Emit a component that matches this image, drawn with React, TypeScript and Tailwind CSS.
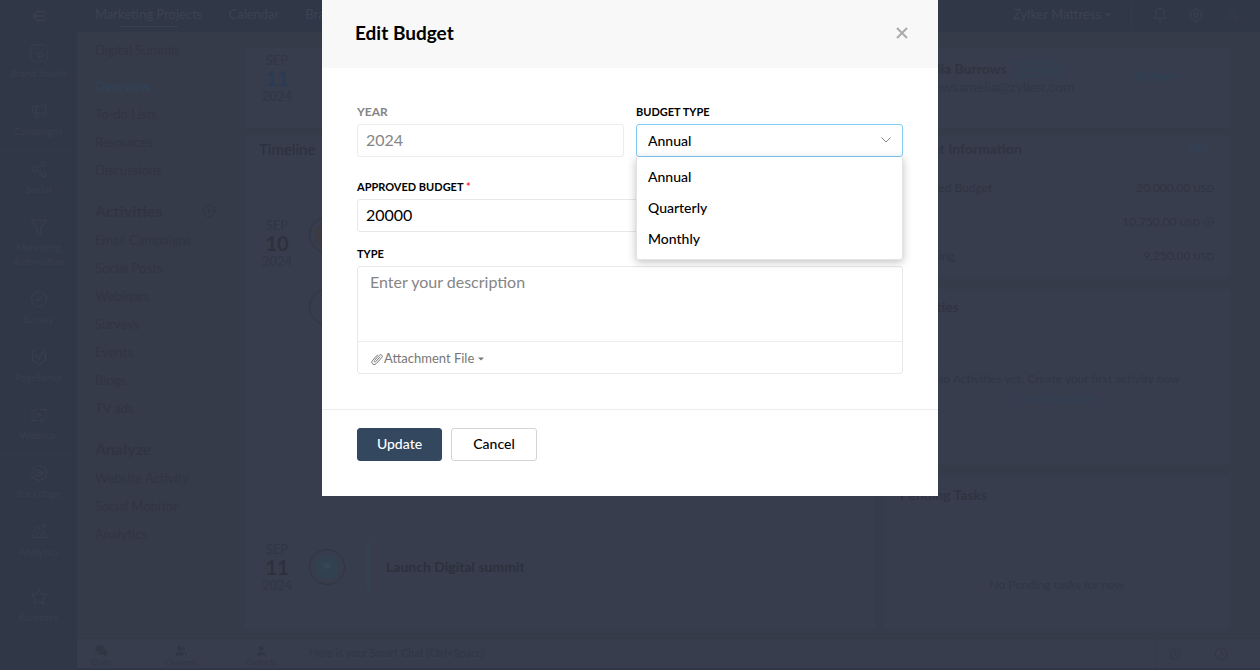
import { useState } from 'react';
import type { ReactNode } from 'react';
import {
    AlarmClock, Bell, CircleCheck, CirclePlus, Clock, Filter, Flag, Megaphone,
    MessagesSquare, Settings, Share2, Star, User, Users,
} from 'lucide-react';

type IconProps = { className?: string; strokeWidth?: number };

function StudioIcon({ className }: IconProps) {
    return (
        <svg viewBox="0 0 18 18" className={className} fill="none" stroke="currentColor" strokeLinejoin="round">
            <rect x=".7" y=".7" width="16.600" height="16.600" rx="4" />
            <path d="M10.500 7.500l1 2.300 2.500.2-1.900 1.600.6 2.500-2.200-1.300-2.200 1.300.6-2.500L7 10l2.500-.2zM4 4l1.500 1.500M9 3.500v1.300M13.500 4.500l-1 1M3.500 8.500h1.300" />
        </svg>
    );
}

function SenseIcon({ className }: IconProps) {
    return (
        <svg viewBox="0 0 18 18" className={className} fill="none" stroke="currentColor" strokeLinejoin="round">
            <path d="M5 3H2.500v9.500L9 16.500l6.500-4V3H13M3 11l3.500-5 2.500 6 3-8 3.500 6" />
        </svg>
    );
}

function WebinarIcon({ className }: IconProps) {
    return (
        <svg viewBox="0 0 18 18" className={className} fill="none" stroke="currentColor" strokeLinejoin="round">
            <path d="M8 2L2 5.500v9h5.500M10 3.500h6v9L11 16.500v-4M6 7v4.500L11 9.200z" />
        </svg>
    );
}

function BackstageIcon({ className }: IconProps) {
    return (
        <svg viewBox="0 0 18 18" className={className} fill="none" stroke="currentColor" strokeLinejoin="round">
            <path d="M9 1l7 4v8l-7 4-7-4V5zM5 6.500l5 0 3 2.500-3 2.500H5M7 9h6" />
        </svg>
    );
}

function AnalyticsIcon({ className }: IconProps) {
    return (
        <svg viewBox="0 0 18 18" className={className} fill="none" stroke="currentColor" strokeLinejoin="round">
            <path d="M1.500 15.500L7.500 4l2.500 4.500L15 2.500M12 2.500h3v3M1.500 15.500h15L13 8.500M5 15.500l3.500-5 2.500 2.500 2-2" />
        </svg>
    );
}

function ClipIcon({ className }: IconProps) {
    return (
        <svg viewBox="0 0 14 14" className={className} fill="none" stroke="currentColor" strokeLinecap="round">
            <path d="M10 5L5.700 9.600c-.9.9-2.100-.2-1.300-1.100l4.900-5.200c1.600-1.600 4.100.5 2.500 2.300L6.300 11.500c-2.600 2.600-6.100-.5-3.700-3.200l4.800-5.200" />
        </svg>
    );
}

function Caret({ className }: IconProps) {
    return (
        <svg viewBox="0 0 8 4" className={className} fill="currentColor" aria-hidden="true">
            <path d="M0 0h8L4 4z" />
        </svg>
    );
}

const railItems = [
    { label: 'Brand Studio', Icon: StudioIcon },
    { label: 'Campaigns', Icon: Megaphone },
    { label: 'Social', Icon: Share2 },
    { label: 'Marketing Automation', Icon: Filter },
    { label: 'Survey', Icon: CircleCheck },
    { label: 'PageSense', Icon: SenseIcon },
    { label: 'Webinar', Icon: WebinarIcon },
    { label: 'Backstage', Icon: BackstageIcon },
    { label: 'Analytics', Icon: AnalyticsIcon },
    { label: 'Favorites', Icon: Star },
];

const projectLinks = ['Overview', 'To-do Lists', 'Resources', 'Discussions'];
const activityLinks = ['Email Campaigns', 'Social Posts', 'Webinars', 'Surveys', 'Events', 'Blogs', 'TV ads'];
const analyzeLinks = ['Website Activity', 'Social Monitor', 'Analytics'];
const budgetTypes = ['Annual', 'Quarterly', 'Monthly'];

const dock = [
    { label: 'Chats', Icon: MessagesSquare },
    { label: 'Channels', Icon: Users },
    { label: 'Contacts', Icon: User },
];

function Rail() {
    return (
        <aside className="w-[77px] shrink-0 bg-[#303746] text-[#383f4e]">
            <div className="flex h-8 items-center justify-center">
                <svg viewBox="0 0 16 12" className="h-3 w-4" fill="none" stroke="currentColor" strokeWidth="1.5">
                    <path d="M5 1.500h9M3 6h11M5 10.500h9" />
                    <path d="M5 2.500L1 6l4 3.500z" fill="currentColor" stroke="none" />
                </svg>
            </div>
            <nav className="flex flex-col pt-1">
                {railItems.map(({ label, Icon }) => (
                    <a key={label} href="#" className="flex flex-col items-center gap-1 border-b border-[#323948] px-2 pt-2 pb-[13px] text-center text-[10px] leading-[14px] last:border-0 last:pt-4">
                        <Icon className="h-[18px] w-[18px]" strokeWidth={1.5} />
                        {label}
                    </a>
                ))}
            </nav>
        </aside>
    );
}

function TopBar() {
    return (
        <header className="flex h-8 shrink-0 items-center justify-between bg-[#303746] pr-5 pb-0.5 pl-[18px] text-[13px] text-[#3c4352]">
            <nav className="flex gap-[26px]">
                <a href="#" className="relative">
                    Marketing Projects
                    <span className="absolute inset-x-6 -bottom-0.5 h-px rounded bg-[#394050]"></span>
                </a>
                <a href="#">Calendar</a>
                <a href="#">Brand Assets</a>
            </nav>
            <div className="flex items-center gap-5">
                <button className="flex items-center gap-1">
                    Zylker Mattress <Caret className="h-1 w-1.5" />
                </button>
                <span className="h-6 w-px bg-[#353c4b]"></span>
                <Bell className="h-4 w-4" strokeWidth={1.5} />
                <Settings className="h-4 w-4" strokeWidth={1.5} />
                <User className="h-4 w-4 text-[#383d45]" strokeWidth={1.5} />
            </div>
        </header>
    );
}

function LinkList({ items }: { items: string[] }) {
    return (
        <ul>
            {items.map((item) => (
                <li key={item} className="h-7 leading-7">
                    <a href="#" className={item === 'Overview' ? 'text-[#2f4359]' : ''}>{item}</a>
                </li>
            ))}
        </ul>
    );
}

function ProjectNav() {
    return (
        <div className="w-[167px] shrink-0 pt-1 pl-[18px] text-[13px] text-[#303542]">
            <p className="mb-2 leading-7">Digital Summit</p>
            <LinkList items={projectLinks} />
            <h2 className="mt-3 flex items-center justify-between pr-7 text-base leading-[30px] font-bold">
                Activities <CirclePlus className="h-3.5 w-3.5" strokeWidth={1.5} />
            </h2>
            <LinkList items={activityLinks} />
            <h2 className="mt-3 text-base leading-[30px] font-bold">Analyze</h2>
            <LinkList items={analyzeLinks} />
        </div>
    );
}

function Card({ className, children }: { className: string; children: ReactNode }) {
    return <section className={`rounded border border-[#363b4a] bg-[#373d4c] ${className}`}>{children}</section>;
}

function DateStamp({ month, day, accent }: { month: string; day: string; accent?: boolean }) {
    return (
        <div className="w-9 text-center text-[13px] leading-4 text-[#313643]">
            <div>{month}</div>
            <div className={accent ? 'text-xl leading-5 font-bold text-[#2b3b54]' : 'text-xl leading-5 font-bold text-[#2d313e]'}>{day}</div>
            <div>2024</div>
        </div>
    );
}

function Timeline() {
    return (
        <div className="flex min-w-0 flex-1 flex-col gap-[5px]">
            <Card className="h-[82px] px-[14px] pt-1">
                <DateStamp month="SEP" day="11" accent />
            </Card>
            <Card className="flex flex-1 flex-col px-[14px] pt-1 pb-9">
                <h2 className="text-[15px] leading-5 font-medium text-[#2d313e]">Timeline</h2>
                <div className="mt-[58px] flex gap-[14px]">
                    <DateStamp month="SEP" day="10" />
                    <div className="flex flex-col gap-9">
                        <span className="flex h-9 w-9 items-center justify-center rounded-full border border-[#303542]">
                            <span className="h-6 w-6 rounded-full bg-[#3c3a42]"></span>
                        </span>
                        <span className="h-9 w-9 rounded-full border border-[#303542]"></span>
                    </div>
                </div>
                <div className="mt-auto flex items-center gap-[14px]">
                    <DateStamp month="SEP" day="11" />
                    <span className="flex h-9 w-9 items-center justify-center rounded-full border border-[#303542]">
                        <span className="flex h-6 w-6 items-center justify-center rounded-full bg-[#314150] text-[#384656]">
                            <Flag className="h-2.5 w-2.5" fill="currentColor" />
                        </span>
                    </span>
                    <div className="ml-2 border-l-[3px] border-[#314251] py-3 pl-4 text-sm leading-6 font-bold text-[#2d313d]">
                        Launch Digital summit
                    </div>
                </div>
            </Card>
        </div>
    );
}

function Overview() {
    return (
        <div className="flex w-[348px] shrink-0 flex-col text-xs text-[#303441]">
            <Card className="mb-[5px] flex h-[82px] items-start justify-between pt-3 pr-12 pl-6">
                <div className="leading-[18px]">
                    <div className="flex items-center gap-1 text-sm leading-[18px] font-bold">
                        <span>Amelia Burrows</span>
                        <span className="border border-[#2e4153] px-1 text-[10px] leading-3 font-normal text-[#2e4153]">OWNER</span>
                    </div>
                    <div className="text-sm leading-[18px] text-[#323744]">burrowsamelia@zylker.com</div>
                </div>
                <button className="mt-2 flex items-center gap-1 text-[13px] font-bold text-[#2e4153]">
                    Active <Caret className="h-1 w-1.5" />
                </button>
            </Card>
            <Card className="mb-[10px] h-[144px] px-4">
                <div className="flex items-center justify-between pr-2">
                    <h2 className="text-sm leading-7 font-bold">Budget Information</h2>
                    <a href="#" className="text-[10px] text-[#2f4359]">Edit</a>
                </div>
                <dl className="mt-2 leading-[34px]">
                    <div className="flex justify-between">
                        <dt>Approved Budget</dt>
                        <dd>20,000.00 <small className="text-[10px]">USD</small></dd>
                    </div>
                    <div className="flex justify-between">
                        <dt>Spent</dt>
                        <dd className="flex items-center gap-1">
                            <span>10,750.00 <small className="text-[10px]">USD</small></span>
                            <CirclePlus className="h-2.5 w-2.5" strokeWidth={1.5} />
                        </dd>
                    </div>
                    <div className="flex justify-between">
                        <dt>Remaining</dt>
                        <dd>9,250.00 <small className="text-[10px]">USD</small></dd>
                    </div>
                </dl>
            </Card>
            <Card className="mb-[10px] h-[178px] px-4 pt-1">
                <h2 className="text-sm leading-7 font-bold">Activities</h2>
                <p className="mt-12 text-center leading-5 text-[#313644]">
                    No Activities yet. Create your first activity now<br />
                    <a href="#" className="text-[#2f4054]">Create Activity</a>
                </p>
            </Card>
            <Card className="flex-1 px-4 pt-1">
                <h2 className="text-sm leading-7 font-bold">Pending Tasks</h2>
                <p className="mt-[66px] text-center leading-5 text-[#313644]">No Pending tasks for now</p>
            </Card>
        </div>
    );
}

function ChatBar() {
    return (
        <footer className="flex h-8 shrink-0 items-center justify-between border-t border-b-2 border-t-[#343948] border-b-[#303645] bg-[#373d4c] pr-8 text-[#313643]">
            <div className="flex items-center gap-8">
                {dock.map(({ label, Icon }) => (
                    <a key={label} href="#" className="flex w-12 flex-col items-center pt-1 text-[8px] leading-[10px]">
                        <Icon className="h-3 w-3" fill="currentColor" />
                        {label}
                    </a>
                ))}
                <input aria-label="Smart Chat" className="-ml-2 w-60 bg-transparent text-[11px] placeholder:text-[#313644]" placeholder="Here is your Smart Chat (Ctrl+Space)" />
            </div>
            <div className="flex h-full items-center gap-8 border-l border-[#343948] pl-3">
                <AlarmClock className="h-3.5 w-3.5" strokeWidth={1.5} />
                <Clock className="h-3.5 w-3.5" strokeWidth={1.5} />
            </div>
        </footer>
    );
}

function EditBudget() {
    const [type, setType] = useState('Annual');
    const [amount, setAmount] = useState('20000');

    return (
        <div className="fixed inset-0 flex items-start justify-center">
            <form role="dialog" aria-label="Edit Budget" className="w-[616px] bg-white text-black">
                <div className="flex h-[68px] items-center justify-between bg-[#f8f8f8] pr-[30px] pb-0.5 pl-[33px]">
                    <h1 className="text-[19px] font-bold">Edit Budget</h1>
                    <button type="button" aria-label="Close" className="text-[#ababab]">
                        <svg viewBox="0 0 12 12" className="h-3 w-3" stroke="currentColor" strokeWidth="2">
                            <path d="M1 1l10 10M11 1L1 11" />
                        </svg>
                    </button>
                </div>

                <div className="px-[35px] pt-9 pb-[35px]">
                    <div className="grid grid-cols-2 gap-3">
                        <div>
                            <label htmlFor="year" className="mb-1 block text-xs leading-4 font-bold text-[#858585]">YEAR</label>
                            <input id="year" disabled value="2024" className="h-[33px] w-full rounded-[3px] border border-[#ececec] bg-white px-2 pb-0.5 text-base text-[#858585]" />
                        </div>
                        <div className="relative">
                            <label htmlFor="budget-type" className="mb-1 block text-[11px] leading-4 font-bold">BUDGET TYPE</label>
                            <div className="relative">
                                <select
                                    id="budget-type"
                                    value={type}
                                    onChange={(e) => setType(e.target.value)}
                                    className="h-[33px] w-full appearance-none rounded-[3px] border border-[#7fcbfb] bg-white px-[11px] text-sm font-medium"
                                >
                                    {budgetTypes.map((t) => <option key={t}>{t}</option>)}
                                </select>
                                <svg viewBox="0 0 10 6" className="pointer-events-none absolute top-[13px] right-3 h-1.5 w-2.5" fill="none" stroke="#888888">
                                    <path d="M.5.5L5 5 9.500.5" />
                                </svg>
                            </div>
                            {/* Open option list */}
                            <ul className="absolute inset-x-0 top-full z-10 rounded-b-[3px] border border-t-0 border-[#e4e4e4] bg-white py-1 pb-[5px] text-sm font-medium shadow-[0_2px_8px_rgba(0,0,0,0.25)]">
                                {budgetTypes.map((t) => (
                                    <li key={t}>
                                        <button type="button" onClick={() => setType(t)} className="block h-[31px] w-full px-[11px] text-left">{t}</button>
                                    </li>
                                ))}
                            </ul>
                        </div>
                    </div>

                    <label htmlFor="approved" className="mt-[22px] mb-1 block text-[11px] leading-4 font-bold">
                        APPROVED BUDGET <span className="text-[#ff2a2a]">*</span>
                    </label>
                    <input id="approved" value={amount} onChange={(e) => setAmount(e.target.value)} className="h-[33px] w-full rounded-[3px] border border-[#e8e8e8] px-2 pb-0.5 text-base" />

                    <label htmlFor="description" className="mt-[14px] mb-1 block text-[11px] leading-4 font-bold">TYPE</label>
                    <div className="rounded-[3px] border border-[#e8e8e8]">
                        <textarea id="description" placeholder="Enter your description" className="block h-[74px] w-full resize-none px-3 pt-[3px] text-base leading-6 placeholder:text-[#858585]" />
                        <div className="flex h-8 items-center border-t border-[#ececec] px-3 pt-0.5">
                            <button type="button" className="flex items-center text-[13px] text-[#777777]">
                                <ClipIcon className="h-3.5 w-3.5" />
                                Attachment File <Caret className="ml-1 h-1 w-1.5" />
                            </button>
                        </div>
                    </div>
                </div>

                <div className="flex gap-[9px] border-t border-[#ececec] px-[35px] pt-[18px] pb-[35px] text-sm font-medium">
                    <button type="submit" className="h-[33px] w-[85px] rounded-[3px] border border-[#33475f] bg-[#33475f] pb-0.5 text-white">Update</button>
                    <button type="button" className="h-[33px] w-[86px] rounded-[3px] border border-[#d4d4d4] bg-white pb-0.5">Cancel</button>
                </div>
            </form>
        </div>
    );
}

export default function App() {
    return (
        <div className="flex h-screen overflow-hidden bg-[#363b4a] font-['Lato',sans-serif]">
            <Rail />
            <div className="flex min-w-0 flex-1 flex-col">
                <TopBar />
                <div className="flex min-h-0 flex-1">
                    <ProjectNav />
                    <main className="flex min-w-0 flex-1 gap-[7px] pt-[15px] pr-[29px] pb-2">
                        <Timeline />
                        <Overview />
                    </main>
                </div>
                <ChatBar />
            </div>
            <EditBudget />
        </div>
    );
}
